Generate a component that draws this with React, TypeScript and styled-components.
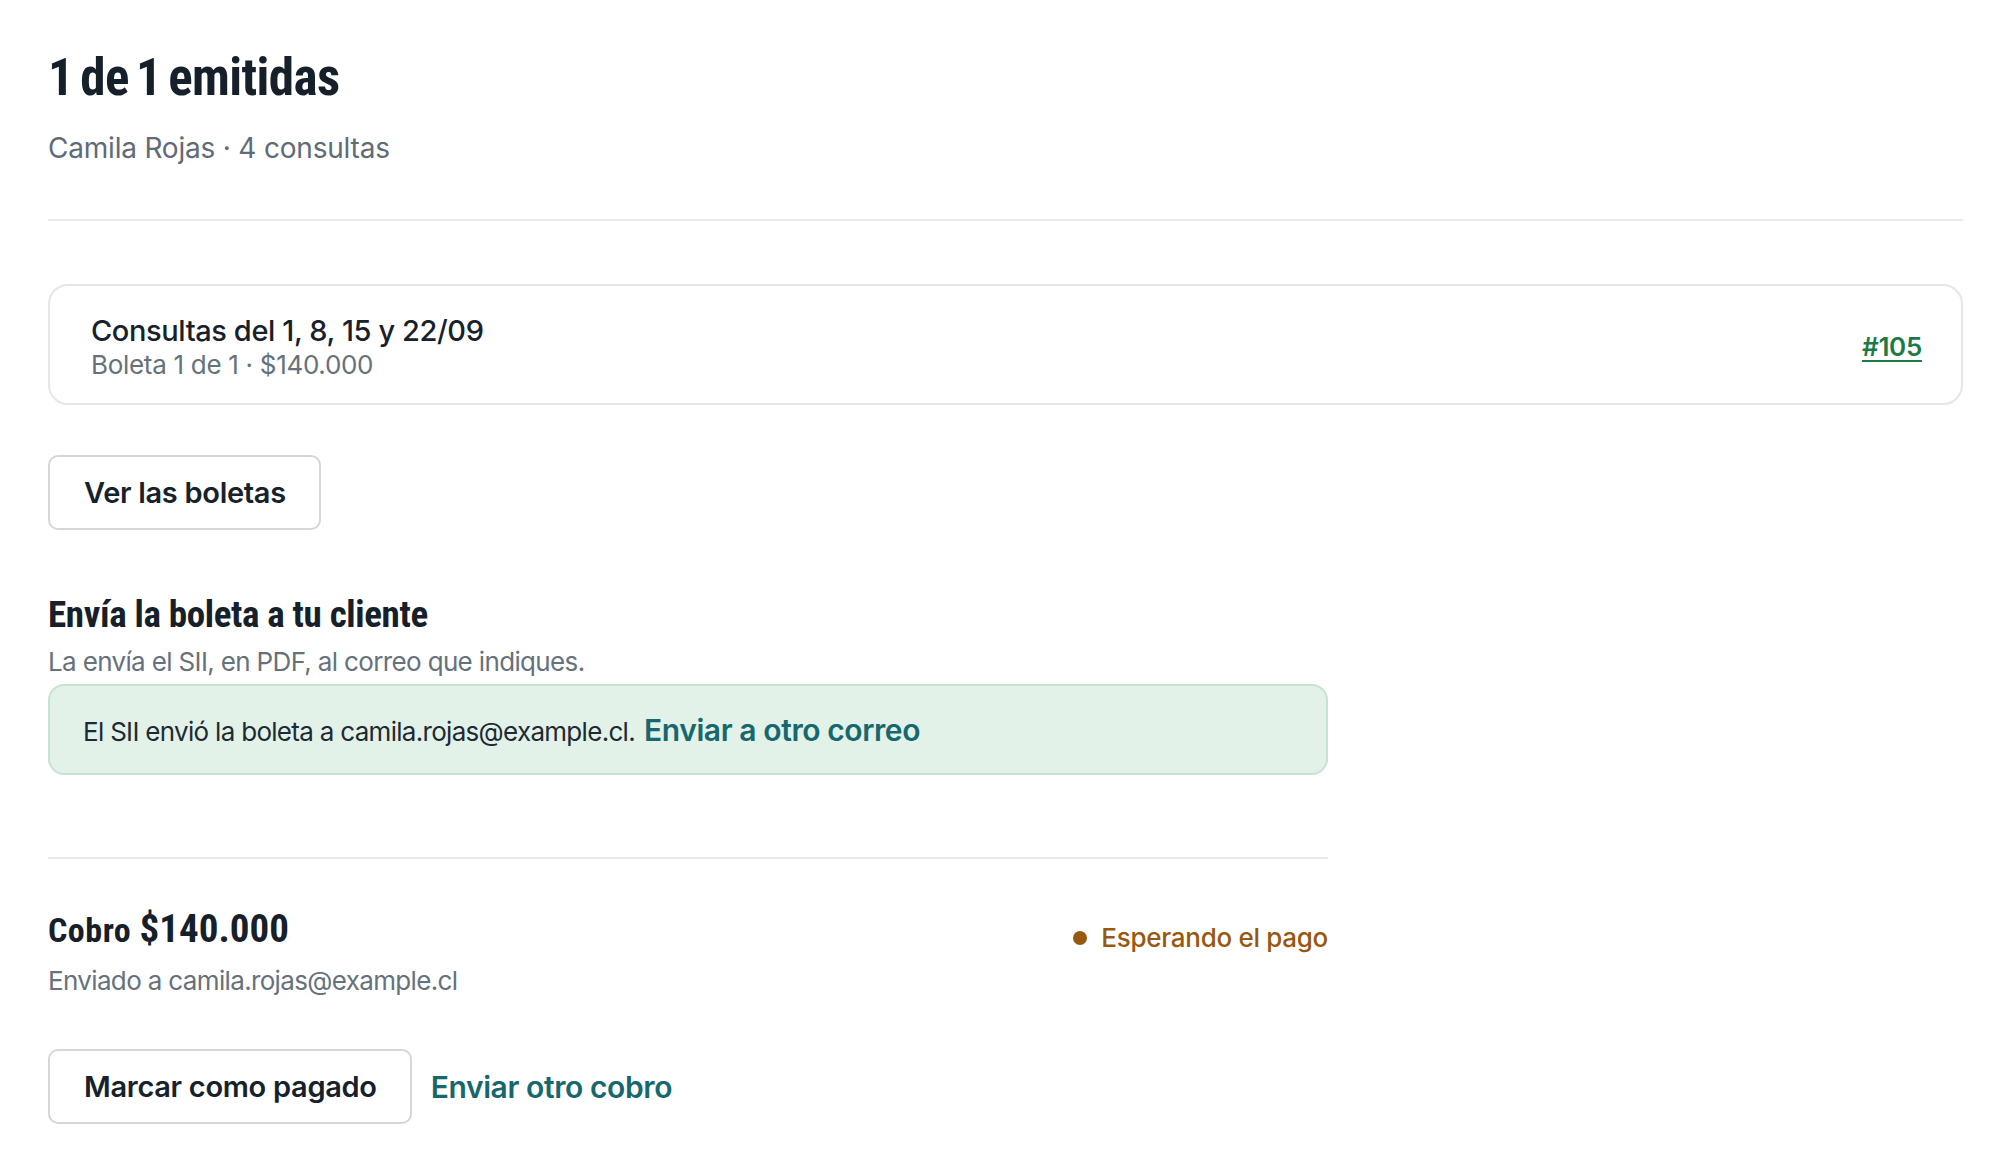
import React from "react";
import styled, { createGlobalStyle } from "styled-components";

const GlobalStyle = createGlobalStyle`
  html, body {
    margin: 0;
    padding: 0;
    background: #ffffff;
  }
  body {
    font-family: Inter, "Noto Sans", sans-serif;
    color: #17212b;
    -webkit-font-smoothing: antialiased;
  }
  * { box-sizing: border-box; }
`;

const condensed = `"Liberation Sans Narrow", "Roboto Condensed", Roboto, sans-serif`;

const Page = styled.main`
  padding: 48px 47px 48px 48px;
  display: flex;
  flex-direction: column;
`;

const Header = styled.header`
  display: flex;
  flex-direction: column;
  gap: 22px;
`;

const Title = styled.h1`
  margin: 0;
  font-family: ${condensed};
  font-weight: 700;
  font-size: 51px;
  line-height: 60px;
  letter-spacing: -0.6px;
  word-spacing: -4px;
  color: #16202a;
`;

const Subtitle = styled.p`
  margin: 0;
  font-size: 28px;
  line-height: 36px;
  color: #5f6b76;
  letter-spacing: -0.2px;
`;

const Divider = styled.hr<{ $top: number; $bottom: number }>`
  border: 0;
  height: 2px;
  background: #e8e9eb;
  margin: ${(p) => p.$top}px 0 ${(p) => p.$bottom}px;
  width: 100%;
`;

const InvoiceCard = styled.div`
  display: flex;
  align-items: center;
  justify-content: space-between;
  border: 2px solid #e4e6e8;
  border-radius: 20px;
  padding: 24px 39px 20px 41px;
  height: 121px;
`;

const CardText = styled.div`
  display: flex;
  flex-direction: column;
`;

const CardTitle = styled.div`
  font-size: 29px;
  font-weight: 500;
  line-height: 36px;
  letter-spacing: -0.4px;
  color: #17212b;
`;

const CardMeta = styled.div`
  font-size: 26px;
  line-height: 32px;
  color: #66717c;
  letter-spacing: -0.3px;
`;

const FolioLink = styled.a`
  font-size: 26px;
  font-weight: 600;
  color: #1c7a47;
  text-decoration: underline;
  text-decoration-thickness: 2px;
  text-underline-offset: 4px;
  letter-spacing: -0.3px;
  cursor: pointer;
`;

const OutlineButton = styled.button<{ $gap?: number }>`
  align-self: flex-start;
  margin-top: ${(p) => p.$gap ?? 0}px;
  height: 75px;
  padding: 0 33px 0 34px;
  border: 2px solid #d4d6d9;
  border-radius: 10px;
  background: #ffffff;
  font-family: Inter, sans-serif;
  font-size: 29px;
  font-weight: 600;
  letter-spacing: -0.3px;
  color: #17212b;
  cursor: pointer;
`;

const Section = styled.section`
  max-width: 1280px;
  width: 100%;
  display: flex;
  flex-direction: column;
`;

const SectionTitle = styled.h2`
  margin: 63px 0 0;
  font-family: ${condensed};
  font-weight: 700;
  font-size: 37px;
  line-height: 44px;
  letter-spacing: -0.35px;
  color: #16202a;
`;

const Hint = styled.p<{ $top: number }>`
  margin: ${(p) => p.$top}px 0 0;
  font-size: 26px;
  line-height: 32px;
  color: #66717c;
  letter-spacing: -0.65px;
`;

const Notice = styled.div`
  margin-top: 6px;
  height: 91px;
  display: flex;
  align-items: baseline;
  gap: 9px;
  padding: 28px 33px 0;
  background: #e2f2e8;
  border: 2px solid #c7e2d1;
  border-radius: 16px;
  font-size: 26px;
  line-height: 32px;
  letter-spacing: -0.7px;
  color: #1e2a33;
`;

const InlineAction = styled.a`
  font-size: 30px;
  font-weight: 600;
  color: #17686e;
  letter-spacing: -0.4px;
  cursor: pointer;
`;

const PaymentRow = styled.div`
  display: flex;
  justify-content: space-between;
  align-items: flex-end;
`;

const PaymentTitle = styled.h3`
  margin: 0;
  font-family: ${condensed};
  font-weight: 700;
  font-size: 34px;
  line-height: 48px;
  letter-spacing: 0.5px;
  color: #16202a;
`;

const Amount = styled.span`
  font-size: 39px;
  letter-spacing: 0;
`;

const Status = styled.div`
  display: flex;
  align-items: center;
  gap: 14px;
  font-size: 26px;
  line-height: 32px;
  font-weight: 500;
  color: #98580f;
  letter-spacing: -0.3px;
`;

const Dot = styled.span`
  width: 14px;
  height: 14px;
  border-radius: 50%;
  background: #98580f;
`;

const Actions = styled.div`
  margin-top: 52px;
  display: flex;
  align-items: center;
  gap: 19px;
`;

const TextAction = styled.a`
  font-size: 30px;
  font-weight: 600;
  color: #17686e;
  letter-spacing: -0.4px;
  cursor: pointer;
`;

export default function App() {
  return (
    <>
      <GlobalStyle />
      <Page>
        <Header>
          <Title>1 de 1 emitidas</Title>
          <Subtitle>Camila Rojas · 4 consultas</Subtitle>
        </Header>

        <Divider $top={53} $bottom={63} />

        <InvoiceCard>
          <CardText>
            <CardTitle>Consultas del 1, 8, 15 y 22/09</CardTitle>
            <CardMeta>Boleta 1 de 1 · $140.000</CardMeta>
          </CardText>
          <FolioLink>#105</FolioLink>
        </InvoiceCard>

        <OutlineButton $gap={50}>Ver las boletas</OutlineButton>

        <Section>
          <SectionTitle>Envía la boleta a tu cliente</SectionTitle>
          <Hint $top={9}>La envía el SII, en PDF, al correo que indiques.</Hint>
          <Notice>
            <span>El SII envió la boleta a camila.rojas@example.cl.</span>
            <InlineAction>Enviar a otro correo</InlineAction>
          </Notice>

          <Divider $top={82} $bottom={46} />

          <PaymentRow>
            <PaymentTitle>
              Cobro <Amount>$140.000</Amount>
            </PaymentTitle>
            <Status>
              <Dot />
              Esperando el pago
            </Status>
          </PaymentRow>
          <Hint $top={11}>Enviado a camila.rojas@example.cl</Hint>

          <Actions>
            <OutlineButton>Marcar como pagado</OutlineButton>
            <TextAction>Enviar otro cobro</TextAction>
          </Actions>
        </Section>
      </Page>
    </>
  );
}
